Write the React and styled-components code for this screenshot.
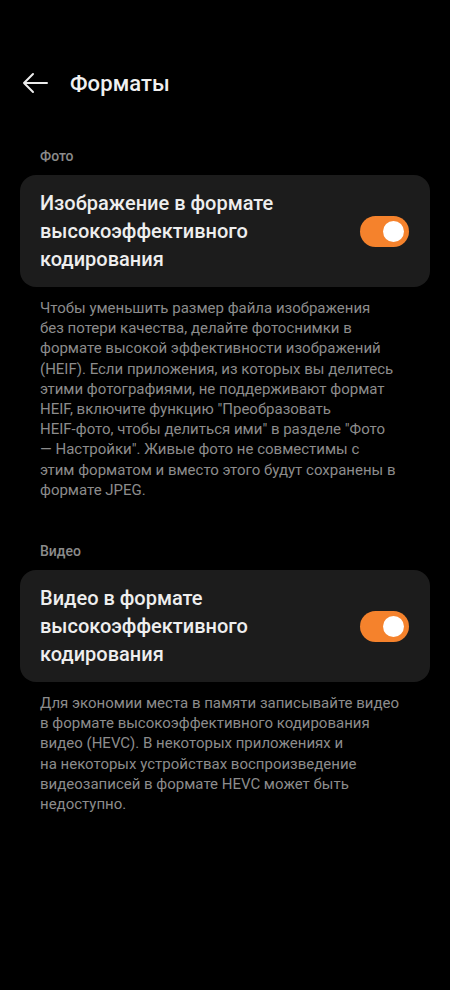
import React from 'react';
import styled, { createGlobalStyle } from 'styled-components';

const GlobalStyle = createGlobalStyle`
  html, body {
    margin: 0;
    padding: 0;
    background: #000;
  }
  body {
    font-family: Roboto, "Noto Sans", sans-serif;
    -webkit-font-smoothing: antialiased;
  }
`;

const Screen = styled.div`
  width: 450px;
  min-height: 990px;
  background: #000;
  color: #ececec;
  box-sizing: border-box;
  padding-top: 66px;
`;

const Header = styled.div`
  display: flex;
  align-items: center;
  height: 34px;
  padding-left: 22px;
  gap: 22px;
`;

const BackButton = styled.button`
  display: flex;
  align-items: center;
  justify-content: center;
  width: 26px;
  height: 26px;
  padding: 0;
  border: 0;
  background: none;
  color: #ececec;
`;

const Title = styled.h1`
  margin: 0;
  font-size: 22px;
  font-weight: 500;
  color: #f0f0f0;
  letter-spacing: 0.1px;
`;

const Section = styled.section`
  margin-top: ${p => p.$top}px;
`;

const Label = styled.div`
  padding-left: 40px;
  font-size: 14px;
  font-weight: 500;
  color: #8b8b8b;
  line-height: 18px;
`;

const Card = styled.div`
  margin: 10px 20px 0;
  padding: 14px 21px 14px 20px;
  min-height: 112px;
  box-sizing: border-box;
  background: #1c1c1c;
  border-radius: 16px;
  display: flex;
  align-items: center;
  justify-content: space-between;
`;

const CardTitle = styled.div`
  font-size: 20px;
  font-weight: 500;
  line-height: 28px;
  color: #eeeeee;
`;

const Toggle = styled.div`
  flex: none;
  width: 49px;
  height: 31px;
  border-radius: 16px;
  background: ${p => (p.$on ? '#f5822c' : '#4a4a4a')};
  display: flex;
  align-items: center;
  justify-content: ${p => (p.$on ? 'flex-end' : 'flex-start')};
  padding: 0 5px;
  box-sizing: border-box;
`;

const Knob = styled.div`
  width: 21px;
  height: 21px;
  border-radius: 50%;
  background: #ffffff;
`;

const Description = styled.p`
  margin: 11px 0 0;
  padding: 0 10px 0 40px;
  font-size: 15px;
  line-height: 20.2px;
  color: #8c8c8c;
  white-space: nowrap;
`;

const ArrowLeft = () => (
  <svg width="26" height="22" viewBox="0 0 26 22" fill="none">
    <path
      d="M25 11H2M11 2L2 11l9 9"
      stroke="currentColor"
      strokeWidth="2"
      strokeLinecap="round"
      strokeLinejoin="round"
    />
  </svg>
);

const lines = arr =>
  arr.map((l, i) => (
    <React.Fragment key={i}>
      {l}
      {i < arr.length - 1 && <br />}
    </React.Fragment>
  ));

const photoText = [
  'Чтобы уменьшить размер файла изображения',
  'без потери качества, делайте фотоснимки в',
  'формате высокой эффективности изображений',
  '(HEIF). Если приложения, из которых вы делитесь',
  'этими фотографиями, не поддерживают формат',
  'HEIF, включите функцию "Преобразовать',
  'HEIF-фото, чтобы делиться ими" в разделе "Фото',
  '— Настройки". Живые фото не совместимы с',
  'этим форматом и вместо этого будут сохранены в',
  'формате JPEG.',
];

const videoText = [
  'Для экономии места в памяти записывайте видео',
  'в формате высокоэффективного кодирования',
  'видео (HEVC). В некоторых приложениях и',
  'на некоторых устройствах воспроизведение',
  'видеозаписей в формате HEVC может быть',
  'недоступно.',
];

const App = () => (
  <>
    <GlobalStyle />
    <Screen>
      <Header>
        <BackButton aria-label="Назад">
          <ArrowLeft />
        </BackButton>
        <Title>Форматы</Title>
      </Header>

      <Section $top={47}>
        <Label>Фото</Label>
        <Card>
          <CardTitle>
            Изображение в формате
            <br />
            высокоэффективного
            <br />
            кодирования
          </CardTitle>
          <Toggle $on>
            <Knob />
          </Toggle>
        </Card>
        <Description>{lines(photoText)}</Description>
      </Section>

      <Section $top={42}>
        <Label>Видео</Label>
        <Card>
          <CardTitle>
            Видео в формате
            <br />
            высокоэффективного
            <br />
            кодирования
          </CardTitle>
          <Toggle $on>
            <Knob />
          </Toggle>
        </Card>
        <Description>{lines(videoText)}</Description>
      </Section>
    </Screen>
  </>
);

export default App;
